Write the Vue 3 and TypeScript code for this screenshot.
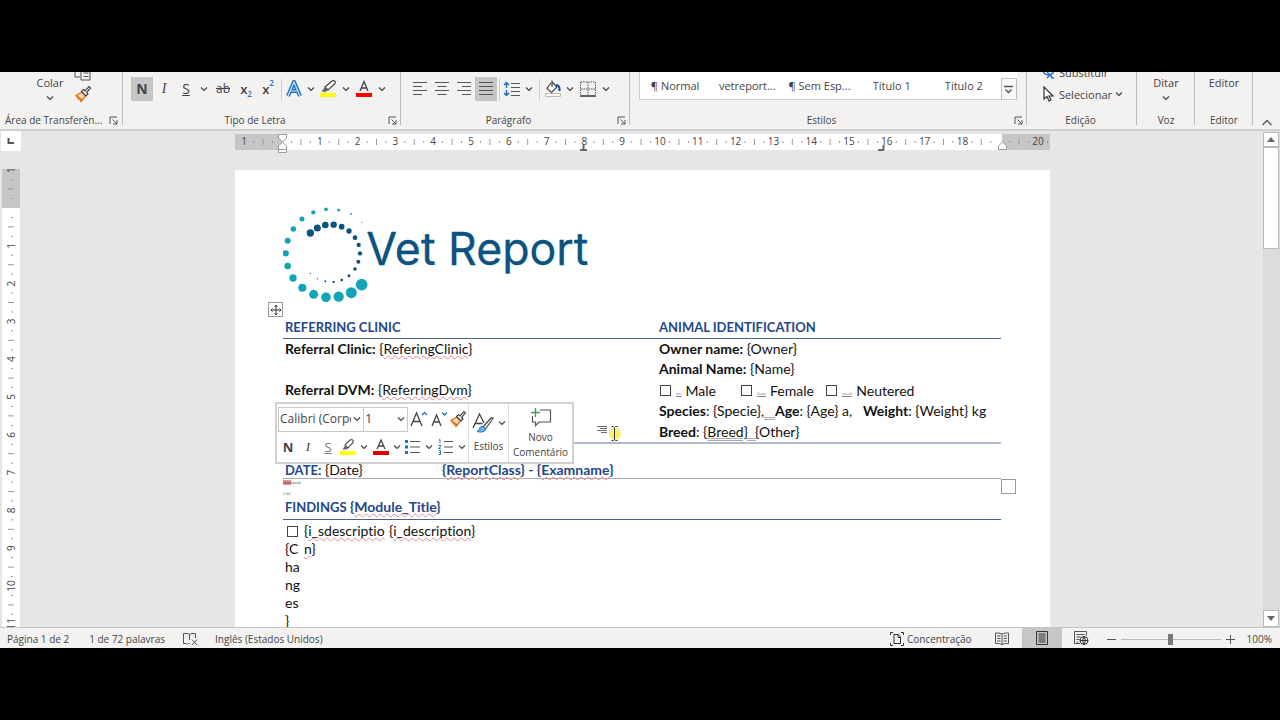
<script setup lang="ts">
import { ref } from 'vue'

interface Tick { pos: number; kind: 'num' | 'dot' | 'bar'; label: string }

const CM = 37.8

function ticks(from: number, to: number, zero: number): Tick[] {
  const out: Tick[] = []
  for (let q = from * 4; q <= to * 4; q++) {
    if (q === 0) continue
    const mod = Math.abs(q) % 4
    out.push({
      pos: zero + (q / 4) * CM,
      kind: mod === 0 ? 'num' : mod === 2 ? 'bar' : 'dot',
      label: String(Math.abs(q / 4)),
    })
  }
  return out
}

const horizontal = ticks(-1.25, 20.25, 47).filter((t) => t.label !== '19')
const vertical = ticks(-1, 11, 39)

const outerDots: number[][] = [
  [396, 97, 2], [363, 72, 3], [326, 60, 4.5], [288, 58, 5.5], [250, 67, 6.5], [216, 87, 7.5], [190, 117, 8],
  [173, 152, 9], [167, 190, 9.5], [173, 228, 10], [189, 264, 11], [217, 293, 12], [251, 313, 13.5],
  [288, 322, 14.5], [326, 320, 15.5], [364, 308, 16.5], [395, 284, 17.5],
]
const innerDots: number[][] = [
  [241, 129, 11], [262, 114, 10.5], [286, 105, 10], [311, 104, 9.5], [335, 110, 8.5], [357, 123, 8],
  [375, 143, 7], [386, 165, 6.5], [390, 190, 6.5], [385, 215, 6], [375, 237, 5.5], [357, 257, 4.5],
  [335, 270, 4], [311, 276, 3.5], [286, 274, 3], [262, 266, 2], [241, 250, 2],
]

const styleNames = ['¶ Normal', 'vetreport...', '¶ Sem Esp...', 'Título 1', 'Título 2']
const activeStyle = ref('')
const zoom = ref(50)
const font = ref('Calibri (Corpo)')
const size = ref('1')
</script>

<template>
  <div class="screen">
    <main class="word">
      <header class="ribbon">
        <section class="group clip">
          <div class="tools">
            <button class="big paste">Colar<svg class="chev" viewBox="0 0 8 8"><path d="M1 2.5 4 5.5 7 2.5" /></svg></button>
            <div class="stack">
              <button class="ic" aria-label="Copiar">
                <svg width="18" height="18" viewBox="0 0 18 18" class="ln"><path d="M6 14H1V1h9M7 3h6l3 3v11H7zM9.500 10h5M9.500 13.500h5" /></svg>
              </button>
              <button class="ic" aria-label="Pincel de formatação">
                <svg width="18" height="18" viewBox="0 0 18 18"><path d="M8 7 2 10.500l1.500 1.500 1 2 1.500.5 1 2L11.500 11z" fill="#f7d9b5" stroke="#d9731a" stroke-width="1.300" /><path d="m3 11 5 4" stroke="#d9731a" stroke-width="1.500" /><path d="M7.500 6.500 12 11l2-2-1.500-1.500L16.500 3 15 1.500 11 6 9.500 4.500z" fill="#fff" stroke="#444" stroke-width="1.200" /></svg>
              </button>
            </div>
          </div>
          <footer class="cap"><span class="left">Área de Transferên...</span><button class="launch" aria-label="Abrir Área de Transferência"><svg viewBox="0 0 9 9"><path d="M1 8V1h7M3.500 3.500 8 8M8 4v4H4" /></svg></button></footer>
        </section>

        <section class="group font">
          <div class="tools row">
            <button class="t on"><b>N</b></button>
            <button class="t serif"><i>I</i></button>
            <button class="t"><u>S</u></button>
            <button class="dd" aria-label="Mais sublinhados"><svg class="chev" viewBox="0 0 8 8"><path d="M1 2.500 4 5.500 7 2.500" /></svg></button>
            <button class="t small"><s>ab</s></button>
            <button class="t x">x<sub>2</sub></button>
            <button class="t x">x<sup>2</sup></button>
            <span class="sep"></span>
            <button class="t" aria-label="Efeitos de texto"><svg width="18" height="18" viewBox="0 0 18 18"><path d="M3 16 9 2l6 14M5.500 11h7" fill="none" stroke="#1a74c4" stroke-width="4" /><path d="M3 16 9 2l6 14M5.500 11h7" fill="none" stroke="#cfe6fa" stroke-width="1.200" /></svg></button>
            <button class="dd slim" aria-label="Opções de efeitos"><svg class="chev" viewBox="0 0 8 8"><path d="M1 2.500 4 5.500 7 2.500" /></svg></button>
            <button class="t" aria-label="Realce"><svg width="18" height="18" viewBox="0 0 18 18"><path d="M1 13h16v4H1z" fill="#ff0" /><path d="M2.500 11.500 6 7l3 3-2.500 2z" fill="#666" /><path d="M6 7l7-6q2-1 3 .5t-1 3L9 10z" fill="#fff" stroke="#444" stroke-width="1.200" /></svg></button>
            <button class="dd" aria-label="Cores de realce"><svg class="chev" viewBox="0 0 8 8"><path d="M1 2.500 4 5.500 7 2.500" /></svg></button>
            <button class="t" aria-label="Cor do tipo de letra"><svg width="18" height="18" viewBox="0 0 18 18"><path d="M1 13h16v4H1z" fill="#f00" /><path d="M5 11 9 1.500 13 11M6.500 8h5" class="lnp" /></svg></button>
            <button class="dd" aria-label="Mais cores"><svg class="chev" viewBox="0 0 8 8"><path d="M1 2.500 4 5.500 7 2.500" /></svg></button>
          </div>
          <footer class="cap"><span>Tipo de Letra</span><button class="launch" aria-label="Abrir Tipo de Letra"><svg viewBox="0 0 9 9"><path d="M1 8V1h7M3.500 3.500 8 8M8 4v4H4" /></svg></button></footer>
        </section>

        <section class="group para">
          <div class="tools row">
            <button class="t" aria-label="Alinhar à esquerda"><svg width="16" height="16" viewBox="0 0 16 16" class="ln"><path d="M1 1.500h14M1 5.500h9M1 9.500h14M1 13.500h9" /></svg></button>
            <button class="t" aria-label="Centrar"><svg width="16" height="16" viewBox="0 0 16 16" class="ln"><path d="M1 1.500h14M3.500 5.500h9M1 9.500h14M3.500 13.500h9" /></svg></button>
            <button class="t" aria-label="Alinhar à direita"><svg width="16" height="16" viewBox="0 0 16 16" class="ln"><path d="M1 1.500h14M6 5.500h9M1 9.500h14M6 13.500h9" /></svg></button>
            <button class="t on" aria-label="Justificar"><svg width="16" height="16" viewBox="0 0 16 16" class="ln"><path d="M1 1.500h14M1 5.500h14M1 9.500h14M1 13.500h14" /></svg></button>
            <span class="sep"></span>
            <button class="t" aria-label="Espaçamento"><svg width="18" height="16" viewBox="0 0 18 16" class="ln"><path d="M8 2.500h9M8 6.500h9M8 10.500h9M8 14.500h9" /><path d="M3.500 7V1.500M1 4l2.500-2.500L6 4M3.500 9v5.500M1 12l2.500 2.500L6 12" stroke="#1a74c4" stroke-width="1.500" /></svg></button>
            <button class="dd slim" aria-label="Opções de espaçamento"><svg class="chev" viewBox="0 0 8 8"><path d="M1 2.500 4 5.500 7 2.500" /></svg></button>
            <span class="sep wide"></span>
            <button class="t narrow" aria-label="Sombreado"><svg width="18" height="18" viewBox="0 0 18 18"><path d="M1.500 13.500h15v3h-15z" fill="#fff" stroke="#bbb" /><path d="M7 3 3 8.500l4.500 4L13 7 8 2V.5M8 2v5" fill="#fff" stroke="#444" stroke-width="1.200" /><path d="M12 5q4 0 3.500 6" fill="none" stroke="#1559a0" stroke-width="2.200" /></svg></button>
            <button class="dd" aria-label="Cores de sombreado"><svg class="chev" viewBox="0 0 8 8"><path d="M1 2.500 4 5.500 7 2.500" /></svg></button>
            <button class="t" aria-label="Limites"><svg width="16" height="16" viewBox="0 0 16 16"><path d="M.5 1h15M.5 1v13M15.500 1v13M8 1v13M1 8h14" fill="none" stroke="#555" stroke-dasharray="1.500 1" /><path d="M0 15h16" stroke="#333" stroke-width="1.500" /></svg></button>
            <button class="dd" aria-label="Mais limites"><svg class="chev" viewBox="0 0 8 8"><path d="M1 2.500 4 5.500 7 2.500" /></svg></button>
          </div>
          <footer class="cap"><span>Parágrafo</span><button class="launch" aria-label="Abrir Parágrafo"><svg viewBox="0 0 9 9"><path d="M1 8V1h7M3.500 3.500 8 8M8 4v4H4" /></svg></button></footer>
        </section>

        <section class="group">
          <div class="tools gallery-wrap">
            <div class="gallery">
              <button v-for="s in styleNames" :key="s" :class="{ picked: s === activeStyle }" @click="activeStyle = s">{{ s }}</button>
              <button class="more" aria-label="Mais estilos"><svg width="9" height="9" viewBox="0 0 9 9" class="ln"><path d="M0 1.500h9M1.500 4.500l3 3 3-3" stroke-width="1.300" /></svg></button>
            </div>
          </div>
          <footer class="cap"><span>Estilos</span><button class="launch" aria-label="Abrir Estilos"><svg viewBox="0 0 9 9"><path d="M1 8V1h7M3.500 3.500 8 8M8 4v4H4" /></svg></button></footer>
        </section>

        <section class="group">
          <div class="tools">
            <div class="stack edit">
              <button><svg width="14" height="16" viewBox="0 0 14 16"><path d="M2 3v3q0 5 7 5M6 8l3 3-3 3M13 9q-3-.5-3 2.500t3 2.500" fill="none" stroke="#1a74c4" stroke-width="1.400" /></svg>Substituir</button>
              <button><svg width="14" height="16" viewBox="0 0 14 16"><path d="M3 1v12l3-2.500L8 15l2-1-2-4h4z" fill="#fff" stroke="#333" stroke-width="1.200" /></svg>Selecionar<svg class="chev" viewBox="0 0 8 8"><path d="M1 2.500 4 5.500 7 2.500" /></svg></button>
            </div>
          </div>
          <footer class="cap"><span>Edição</span></footer>
        </section>

        <section class="group">
          <div class="tools"><button class="big">Ditar<svg class="chev" viewBox="0 0 8 8"><path d="M1 2.500 4 5.500 7 2.500" /></svg></button></div>
          <footer class="cap plain"><span>Voz</span></footer>
        </section>
        <section class="group">
          <div class="tools"><button class="big solo">Editor</button></div>
          <footer class="cap plain"><span>Editor</span></footer>
        </section>
        <div class="collapse"><button aria-label="Fechar friso"><svg width="10" height="7" viewBox="0 0 10 7" class="ln"><path d="M.5 6 5 1.500 9.500 6" stroke-width="1.300" /></svg></button></div>
      </header>

      <div class="work">
        <aside class="vside">
          <button class="tabsel" aria-label="Tabulação esquerda"><svg width="8" height="8" viewBox="0 0 8 8"><path d="M1.500 1v5H7" fill="none" stroke="#555" stroke-width="2" /></svg></button>
          <svg class="vruler" width="18" height="458" viewBox="0 0 18 458">
            <rect width="18" height="458" fill="#fff" /><rect width="18" height="39" fill="#c6c6c6" />
            <template v-for="t in vertical" :key="t.pos">
              <text v-if="t.kind === 'num'" :transform="`translate(13 ${t.pos}) rotate(-90)`">{{ t.label }}</text>
              <path v-else :d="t.kind === 'bar' ? `M6 ${t.pos}h6` : `M9 ${t.pos}h2`" />
            </template>
          </svg>
        </aside>

        <div class="canvas">
          <svg class="hruler" width="815" height="20" viewBox="0 0 815 20">
            <rect width="815" height="16" fill="#fff" /><rect width="47" height="16" fill="#c6c6c6" /><rect x="767" width="48" height="16" fill="#c6c6c6" />
            <template v-for="t in horizontal" :key="t.pos">
              <text v-if="t.kind === 'num'" :x="t.pos" y="11">{{ t.label }}</text>
              <path v-else :d="t.kind === 'bar' ? `M${t.pos} 5v6` : `M${t.pos} 7v2`" />
            </template>
            <g class="marker"><path d="M43.500.500h8V4l-4 4-4-4zM43.500 15.500V12l4-4 4 4v3.500zM43.500 15.500h8v3h-8zM763.500 15.500V12l4-4 4 4v3.500z" /></g>
            <path d="M348.500 10v6M345 16h7M648.500 11v5M643 16h6" class="tab" />
          </svg>

          <article class="page">
            <svg class="logo" width="310" height="102" viewBox="159 30 930 306" role="img" aria-label="Vet Report">
              <circle v-for="(d, i) in outerDots" :key="'o' + i" :cx="d[0]" :cy="d[1]" :r="d[2]" fill="#12a5b8" />
              <circle v-for="(d, i) in innerDots" :key="'i' + i" :cx="d[0]" :cy="d[1]" :r="d[2]" fill="#0b5380" />
              <text x="409" y="226">Vet Report</text>
            </svg>

            <table class="info">
              <thead><tr><th>REFERRING CLINIC</th><th>ANIMAL IDENTIFICATION</th></tr></thead>
              <tbody>
                <tr><td><b>Referral Clinic:</b> {<span class="sp">ReferingClinic</span>}</td><td><b>Owner name:</b> {Owner}</td></tr>
                <tr><td></td><td><b>Animal Name:</b> {Name}</td></tr>
                <tr>
                  <td><b>Referral DVM:</b> {<span class="sp">ReferringDvm</span>}</td>
                  <td>
                    <div class="checks">
                      <label><input type="checkbox" /><small>{m}</small>Male</label>
                      <label><input type="checkbox" /><small>{fem}</small>Female</label>
                      <label><input type="checkbox" /><small>{neut}</small>Neutered</label>
                    </div>
                  </td>
                </tr>
                <tr><td></td><td><b>Species</b>: {Specie}<span class="gr">,&nbsp;&nbsp;&nbsp;</span><b>Age</b>: {Age} a,&nbsp;&nbsp; <b>Weight</b>: {Weight} kg</td></tr>
                <tr><td></td><td><b>Breed</b>: {<span class="gr">Breed}&nbsp;&nbsp;{</span>Other}</td></tr>
              </tbody>
            </table>

            <div class="dateline">
              <span><b class="caps">DATE:</b> {Date}</span>
              <b>{<span class="sp">ReportClass</span>} - {<span class="sp">Examname</span>}</b>
            </div>
            <p class="tiny"><span>{#m}</span>{mod}</p>
            <p class="tiny last">{/m}</p>
            <h2><span class="caps">FINDINGS</span> {<span class="sp">Module_Title</span>}</h2>
            <table class="findings">
              <tbody>
                <tr>
                  <td><input type="checkbox" aria-label="Changes" /><br />{C<br />ha<br />ng<br />es<br />}</td>
                  <td>{<span class="sp">i_sdescriptio</span><br /><span class="sp">n</span>}</td>
                  <td>{<span class="sp">i_description</span>}</td>
                </tr>
              </tbody>
            </table>

            <span class="move"><svg width="12" height="12" viewBox="0 0 12 12" class="ln"><path d="M6 1v10M1 6h10M4.500 2.500 6 1l1.500 1.500M4.500 9.500 6 11l1.500-1.500M2.500 4.500 1 6l1.500 1.500M9.500 4.500 11 6 9.500 7.500" stroke="#333" /></svg></span>
            <span class="resize"></span>

            <svg class="pointer" width="26" height="20" viewBox="0 0 26 20"><circle cx="19" cy="11" r="6" fill="#f5ee5a" opacity=".85" /><path d="M1 3.500h10M4 5.500h7M1 7.500h10M5 9.500h6" stroke="#666" /><path d="M15.500 3.500h2l1 1 1-1h2M15.500 17.500h2l1-1 1 1h2M18.500 4.500v12" fill="none" stroke="#333" /></svg>

            <div class="mini">
              <div class="mrows">
                <div class="mrow">
                  <label class="combo"><select v-model="font" aria-label="Tipo de letra"><option>Calibri (Corpo)</option></select><svg class="chev" viewBox="0 0 8 8"><path d="M1 2.500 4 5.500 7 2.500" /></svg></label>
                  <label class="combo size"><select v-model="size" aria-label="Tamanho"><option>1</option></select><svg class="chev" viewBox="0 0 8 8"><path d="M1 2.500 4 5.500 7 2.500" /></svg></label>
                  <button class="m" aria-label="Aumentar"><svg width="18" height="18" viewBox="-1 0 18 18"><path d="M1 16 6.500 3 12 16M3 11.500h7" class="lnp" /><path d="m12 5 2.500-2.500L17 5" fill="none" stroke="#1a74c4" stroke-width="1.300" /></svg></button>
                  <button class="m" aria-label="Diminuir"><svg width="18" height="18" viewBox="-1 0 18 18"><path d="M2 16 6.500 5 11 16M3.500 12h6" class="lnp" /><path d="m12 2.500 2.500 2.500L17 2.500" fill="none" stroke="#1a74c4" stroke-width="1.300" /></svg></button>
                  <button class="m" aria-label="Pincel"><svg width="18" height="18" viewBox="0 0 18 18"><path d="M8 7 2 10.500l1.500 1.500 1 2 1.500.5 1 2L11.500 11z" fill="#f7d9b5" stroke="#d9731a" stroke-width="1.300" /><path d="m3 11 5 4" stroke="#d9731a" stroke-width="1.500" /><path d="M7.500 6.500 12 11l2-2-1.500-1.500L16.500 3 15 1.500 11 6 9.500 4.500z" fill="#fff" stroke="#444" stroke-width="1.200" /></svg></button>
                </div>
                <div class="mrow">
                  <button class="m"><b>N</b></button>
                  <button class="m serif"><i>I</i></button>
                  <button class="m thin"><u>S</u></button>
                  <button class="m" aria-label="Realce"><svg width="18" height="18" viewBox="0 0 18 18"><path d="M1 13h16v4H1z" fill="#ff0" /><path d="M3.500 11.500 6 7.500l3 3-1.500 1z" fill="#666" /><path d="M6 7l5-5q2-1 3 .5t-1 3L9 10z" fill="#fff" stroke="#555" stroke-width="1.200" /></svg></button>
                  <button class="dd" aria-label="Cores de realce"><svg class="chev" viewBox="0 0 8 8"><path d="M1 2.500 4 5.500 7 2.500" /></svg></button>
                  <button class="m" aria-label="Cor do tipo de letra"><svg width="18" height="18" viewBox="0 0 18 18"><path d="M1 13h16v4H1z" fill="#e00000" /><path d="M5 11 9 2l4 9M6.500 8h5" class="lnp" /></svg></button>
                  <button class="dd" aria-label="Mais cores"><svg class="chev" viewBox="0 0 8 8"><path d="M1 2.500 4 5.500 7 2.500" /></svg></button>
                  <button class="m" aria-label="Marcas"><svg width="18" height="18" viewBox="0 0 18 18" class="ln"><path d="M6 3.500h10M6 9h10M6 14.500h10" /><path d="M1 2h3v3H1zM1 7.500h3v3H1zM1 13h3v3H1z" fill="#1a74c4" stroke="none" /></svg></button>
                  <button class="dd" aria-label="Mais marcas"><svg class="chev" viewBox="0 0 8 8"><path d="M1 2.500 4 5.500 7 2.500" /></svg></button>
                  <button class="m" aria-label="Numeração"><svg width="18" height="18" viewBox="0 0 18 18" class="ln"><path d="M7 3.500h9M7 9h9M7 14.500h9" /><path d="M2 2l1-.5V5M1.500 7.500h2v1.500l-2 1.500h2M1.500 12.500h2v4h-2M2 14.500h1.500" stroke="#1a74c4" /></svg></button>
                  <button class="dd" aria-label="Mais numeração"><svg class="chev" viewBox="0 0 8 8"><path d="M1 2.500 4 5.500 7 2.500" /></svg></button>
                </div>
              </div>
              <button class="mbig styles"><span><svg width="24" height="22" viewBox="0 0 24 22"><path d="M2 16 8.500 2 13 11M4.500 11.500h7" class="lnp" /><path d="m12 15 8-9q1.500-1 2 .5L14.500 17z" fill="#fff" stroke="#444" stroke-width="1.200" /><path d="M12 14.500q-4 0-3.500 3L6 19.500q7 2 9-2.500z" fill="#6db3ee" stroke="#1a74c4" /></svg><svg class="chev" viewBox="0 0 8 8"><path d="M1 2.500 4 5.500 7 2.500" /></svg></span>Estilos</button>
              <button class="mbig comment"><svg width="22" height="20" viewBox="0 0 22 20"><path d="M10 3h10.500v12H9l-3.500 3.500V15H2.500V9" fill="none" stroke="#555" stroke-width="1.200" /><path d="M5.500 1v9M1 5.500h9" stroke="#3a9a52" stroke-width="1.300" /></svg>Novo<br />Comentário</button>
            </div>
          </article>
        </div>

        <aside class="scroll">
          <button aria-label="Para cima"><svg width="8" height="5" viewBox="0 0 8 5"><path d="M0 5 4 0l4 5z" /></svg></button>
          <div class="thumb"></div>
          <button aria-label="Para baixo"><svg width="8" height="5" viewBox="0 0 8 5"><path d="M0 0l4 5 4-5z" /></svg></button>
        </aside>
      </div>

      <footer class="status">
        <button class="pg">Página 1 de 2</button>
        <button class="words">1 de 72 palavras</button>
        <button class="proof" aria-label="Revisão"><svg width="16" height="14" viewBox="0 0 16 14" class="ln"><path d="M7 11.500H5.500l-1 1-1-1h-3V1.500h3.500q2.500 0 2.500 1.500Q7 1.500 9 1.500h3.500V6M6.500 3v5M9 7.500l5 5.500M14 7.500 9 13" /></svg></button>
        <button class="lang">Inglês (Estados Unidos)</button>
        <span class="grow"></span>
        <button class="focus"><svg width="14" height="14" viewBox="0 0 14 14" class="ln"><path d="M3 .5H.5V3M11 .5h2.500V3M.5 11v2.500H3M13.500 11v2.500H11M4 2.500h4.500L10.500 5v6.500H4zM8 3v2.500h2.500" stroke="#333" /></svg>Concentração</button>
        <button class="view" aria-label="Modo de Leitura"><svg width="14" height="13" viewBox="0 0 14 13" class="ln"><path d="M7 2v10.500M7 2Q4 .5 .5 1v10.500Q4 11 7 12.500 10 11 13.500 11.500V1Q10 .5 7 2M2 4h3.500M2 6.500h3.500M2 9h3.500M8.500 4H12M8.500 6.500H12M8.500 9H12" /></svg></button>
        <button class="view sel" aria-label="Esquema de Impressão"><svg width="12" height="14" viewBox="0 0 12 14" class="ln"><path d="M.5.5h11v13H.5zM2.500 3h7M2.500 5h7M2.500 7h7M2.500 9h7M2.500 11h7" stroke="#333" /></svg></button>
        <button class="view" aria-label="Esquema Web"><svg width="15" height="14" viewBox="0 0 15 14" class="ln"><path d="M6 12.500H.5v-12h12v4M2.500 3.500h8M2.500 6h4M2.500 8.500h3M2.500 11h2" /><circle cx="10" cy="9.500" r="4" stroke="#333" /><path d="M6 9.500h8M10 5.500q-3 4 0 8 3-4 0-8" stroke="#333" /></svg></button>
        <button class="pm" aria-label="Reduzir"><svg width="9" height="9" viewBox="0 0 9 9" class="ln"><path d="M0 4.500h9" /></svg></button>
        <input v-model="zoom" class="zoom" type="range" min="0" max="100" aria-label="Zoom" />
        <button class="pm" aria-label="Ampliar"><svg width="9" height="9" viewBox="0 0 9 9" class="ln"><path d="M0 4.500h9M4.500 0v9" /></svg></button>
        <button class="pct">100%</button>
      </footer>
    </main>
  </div>
</template>

<style>
body { margin: 0; background: #000; }
</style>

<style scoped>
* { box-sizing: border-box; }
.screen { height: 100vh; padding: 72px 0; background: #000; font-family: "Open Sans", "Noto Sans", sans-serif; font-size: 11px; color: #444; }
.word { height: 100%; display: flex; flex-direction: column; overflow: hidden; background: #e6e6e6; }
button { border: 0; padding: 0; margin: 0; background: none; font: inherit; color: inherit; display: flex; align-items: center; justify-content: center; white-space: nowrap; }
svg { flex: none; display: block; }
.ln { fill: none; stroke: #555; stroke-width: 1; }
.lnp { fill: none; stroke: #444; stroke-width: 1.3; }
.chev { width: 8px; height: 8px; fill: none; stroke: #444; stroke-width: 1.2; }

.ribbon { flex: none; height: 59px; display: grid; grid-template-columns: 123px 278px 229px minmax(0, 1fr) 110px 58px 58px 27px; background: #f3f2f1; border-bottom: 2px solid #d2d0ce; }
.group { position: relative; height: 57px; display: flex; flex-direction: column; overflow: hidden; background: linear-gradient(#c0bebc, #c0bebc) right top / 1px 53px no-repeat; }
.tools { height: 33px; display: flex; align-items: flex-end; justify-content: center; }
.row { padding-bottom: 4px; justify-content: flex-start; }
.font .row, .para .row { padding-left: 8px; }
.cap { height: 24px; padding: 6px 3px 0 0; display: flex; align-items: center; font-size: 10px; }
.cap.plain { padding-right: 0; }
.cap span { flex: 1; text-align: center; white-space: nowrap; }
.cap .left { text-align: left; padding-left: 5px; }
.launch { width: 11px; height: 16px; }
.launch svg { width: 9px; height: 9px; fill: none; stroke: #555; }
.clip .cap { padding-right: 4px; }
.big { flex-direction: column; gap: 3px; line-height: 16px; padding-bottom: 3px; }
.big.solo { padding-bottom: 14px; }
.clip .tools { justify-content: flex-start; padding-left: 36px; }
.paste { width: 28px; }
.stack { display: flex; flex-direction: column; margin-left: 10px; }
.stack .ic { height: 22px; width: 18px; }
.stack.edit { margin: 0; align-items: flex-start; }
.edit button { height: 22px; gap: 4px; }
.edit .chev { margin-left: -1px; }
.t { width: 22px; height: 24px; font-size: 14px; line-height: 20px; }
.t.on { background: #c6c6c6; }
.t.small { font-size: 12px; width: 24px; }
.t.narrow { width: 20px; }
.t.x { font-size: 13px; font-weight: 600; }
.t sub, .t sup { font-size: 8px; color: #1a74c4; line-height: 8px; }
.t sub { align-self: flex-end; margin-bottom: 3px; }
.t sup { align-self: flex-start; margin-top: 2px; }
.serif { font-family: "Liberation Serif", serif; }
.dd { width: 14px; height: 24px; }
.dd.slim { width: 12px; }
.sep { width: 4px; height: 22px; background: linear-gradient(#d0cecc, #d0cecc) center / 1px 100% no-repeat; }
.sep.wide { width: 8px; }
.gallery-wrap { padding: 0 10px 0 9px; align-items: flex-start; }
.gallery { flex: 1; height: 28px; display: grid; grid-template-columns: repeat(5, minmax(0, 1fr)) 16px; background: #fff; border: solid #d0cecc; border-width: 0 0 1px 1px; }
.gallery button:not(.more) { padding-right: 2px; }
.gallery .picked { background: #e6e6e6; }
.gallery .more { border: solid #c0bebc; border-width: 1px 1px 0; margin-top: 6px; background: #f8f8f8; }
.collapse { display: flex; align-items: flex-end; justify-content: center; padding-bottom: 3px; }

.work { flex: 1; min-height: 0; overflow: hidden; display: grid; grid-template-columns: 22px minmax(0, 1fr) 17px; grid-template-rows: minmax(0, 1fr); }
.vside { overflow: hidden; }
.tabsel { width: 20px; height: 20px; margin-left: 1px; background: #fff; }
.vruler { margin: 18px 0 0 2px; }
.vruler text, .hruler text { font-size: 10px; text-anchor: middle; fill: #444; }
.vruler path, .hruler path { stroke: #999; }
.canvas { display: flex; flex-direction: column; align-items: center; overflow: hidden; }
.hruler { margin-top: 3px; }
.hruler .marker path { fill: #fff; stroke: #999; }
.hruler .tab { fill: none; stroke: #666; stroke-width: 2; }

.page { position: relative; flex: none; width: 815px; min-height: 600px; margin-top: 16px; padding: 30px 49px 0 48px; background: #fff; font-family: Lato, "Open Sans", sans-serif; font-size: 14px; line-height: 18px; font-variant-ligatures: none; color: #111; }
.logo text { font-family: Inter, sans-serif; font-size: 134px; fill: #0b5380; stroke: #0b5380; stroke-width: 1; stroke-linejoin: round; }
table { border-collapse: collapse; table-layout: fixed; width: 100%; }
.info { margin-top: 14px; border-bottom: 2px solid #b0bccb; }
.info th { height: 22px; padding: 0 2px; text-align: left; font-size: 13px; color: #24478a; border-bottom: 1px solid #45638f; }
.info th:first-child { width: 374px; }
.info td { height: 21px; padding: 0 2px; white-space: nowrap; vertical-align: top; line-height: 19px; }
.checks { display: grid; grid-template-columns: 81px 85px auto; height: 21px; padding-left: 1px; }
.checks label { display: flex; align-items: center; }
.checks small { font-size: 4px; line-height: 8px; color: #888; margin: 6px 4px 0 5px; text-decoration: underline; }
input[type="checkbox"] { appearance: none; width: 11px; height: 11px; margin: 0; border: 1px solid #444; background: #fff; }
.sp { text-decoration: underline wavy #e08a90 1px; text-underline-offset: 1px; text-decoration-skip-ink: none; }
.gr { text-decoration: underline double #aaa 1px; }
.caps { font-size: 13px; }
.dateline { margin-top: 17px; height: 18px; padding: 0 2px; display: grid; grid-template-columns: 157px 1fr; line-height: 17px; border-bottom: 1px solid #aaa; }
.dateline b, h2 { color: #24478a; }
.tiny { margin: 0; height: 11px; line-height: 8px; font-size: 4px; color: #666; }
.tiny.last { height: 7px; }
.tiny span { background: #d99; color: #722; }
h2 { margin: 0; padding: 0 2px; height: 23px; line-height: 20px; font-size: 14px; border-bottom: 1px solid #45638f; }
.findings { margin-top: 2px; width: 260px; }
.findings td { vertical-align: top; padding: 0 0 0 2px; white-space: nowrap; }
.findings td:nth-child(1) { width: 19px; }
.findings td:nth-child(2) { width: 85px; }
.findings input { vertical-align: middle; margin: 0 0 2px 2px; }

.move { position: absolute; left: 33px; top: 132px; width: 15px; height: 15px; border: 1px solid #999; background: #fff; display: grid; place-items: center; }
.resize { position: absolute; left: 766px; top: 309px; width: 15px; height: 15px; border: 1px solid #999; background: #fff; }
.pointer { position: absolute; left: 361px; top: 253px; }

.mini { position: absolute; left: 40px; top: 232px; width: 299px; height: 62px; display: flex; background: #fff; border: 2px solid #d0d0d0; font-family: "Open Sans", "Noto Sans", sans-serif; font-size: 10px; color: #444; }
.mrows { flex: none; width: 192px; padding: 2px 0 0 1px; border-right: 1px solid #ddd; }
.mrow { display: flex; align-items: center; height: 26px; margin-bottom: 2px; }
.combo { position: relative; width: 87px; height: 25px; border: 1px solid #c8c8c8; display: flex; align-items: center; }
.combo.size { width: 44px; border-left: 0; }
.combo select { appearance: none; width: 100%; border: 0; background: none; padding: 0 12px 0 1px; font: inherit; font-size: 12px; color: #444; outline: 0; }
.combo .chev { position: absolute; right: 2px; }
.m { width: 20px; height: 22px; font-size: 13px; flex: none; }
.m.thin { color: #777; }
.mini .dd { width: 13px; }
.mbig { flex-direction: column; flex: none; line-height: 15px; }
.styles { width: 40px; gap: 5px; border-right: 1px solid #ddd; }
.styles span { display: flex; align-items: center; }
.styles .chev { margin-left: 3px; }
.comment { flex: 1; }
.comment svg { margin-bottom: 3px; }

.scroll { display: flex; flex-direction: column; background: #dcdcdc; padding: 1px 1px 0 0; }
.scroll button { height: 15px; background: #fff; border: 1px solid #bbb; }
.scroll button:last-child { margin-top: auto; height: 17px; }
.scroll path { fill: #666; }
.thumb { height: 102px; background: #fff; border: 1px solid #bbb; }

.status { flex: none; height: 21px; display: flex; align-items: center; padding: 2px 8px 0 7px; background: #f3f2f1; border-top: 1px solid #c8c6c4; font-size: 10px; }
.status > * { flex: none; }
.status .grow { flex: 1; }
.words { margin-left: 20px; }
.proof { margin: 0 16px 0 18px; }
.focus { gap: 3px; margin-right: 10px; }
.view { width: 40px; height: 20px; margin-top: -2px; }
.view.sel { background: #c6c6c6; }
.pm { margin: 0 5px; }
.zoom { appearance: none; width: 100px; height: 12px; margin: 0; background: linear-gradient(#bbb, #bbb) center / 100% 1px no-repeat; }
.zoom::-webkit-slider-thumb { appearance: none; width: 5px; height: 11px; background: #777; border: 0; border-radius: 0; }
.pct { margin-left: 7px; }
</style>
